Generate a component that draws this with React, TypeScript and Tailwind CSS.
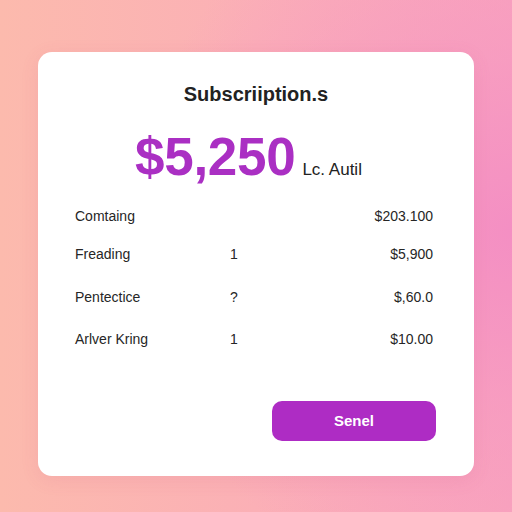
import React from "react";

const rows = [
  { label: "Comtaing", qty: "", value: "$203.100", mt: "mt-[23px]" },
  { label: "Freading", qty: "1", value: "$5,900", mt: "mt-[18px]" },
  { label: "Pentectice", qty: "?", value: "$,60.0", mt: "mt-[23px]" },
  { label: "Arlver Kring", qty: "1", value: "$10.00", mt: "mt-[22px]" },
];

export default function App() {
  return (
    <div
      className="w-[512px] h-[512px] overflow-hidden pt-[52px] pl-[38px] bg-[radial-gradient(circle_at_100%_45%,#f48fc3_0%,rgba(246,150,195,0.6)_30%,rgba(250,170,185,0)_65%),linear-gradient(90deg,#fcbaad_0%,#fbb0b6_50%,#f9a6bc_100%)]"
      style={{ fontFamily: '"Liberation Sans", Arial, sans-serif' }}
    >
      <div className="w-[436px] h-[424px] bg-white rounded-[14px] shadow-[0_4px_18px_rgba(200,80,120,0.12)] flex flex-col">
        <div className="pt-[30px] text-center text-[20px] leading-[24px] font-bold text-[#222222]">
          Subscriiption.s
        </div>
        <div className="mt-[24px] flex items-baseline justify-center pr-[15px]">
          <span className="text-[53px] leading-none font-bold text-[#aa2fc3] tracking-[-0.3px]">
            $5,250
          </span>
          <span className="ml-[7px] text-[17px] leading-none text-[#222222]">Lc. Autil</span>
        </div>
        <div className="pl-[37px] pr-[41px]">
          {rows.map((r) => (
            <div key={r.label} className={`${r.mt} flex items-center h-[20px] text-[14px] leading-[20px] text-[#262626]`}>
              <span className="w-[155px]">{r.label}</span>
              <span className="w-[40px]">{r.qty}</span>
              <span className="flex-1 text-right">{r.value}</span>
            </div>
          ))}
        </div>
        <div className="mt-[52px] pr-[38px] flex justify-end">
          <button className="w-[164px] h-[40px] rounded-[10px] bg-[#ae2cc4] text-white text-[15px] font-bold">
            Senel
          </button>
        </div>
      </div>
    </div>
  );
}
